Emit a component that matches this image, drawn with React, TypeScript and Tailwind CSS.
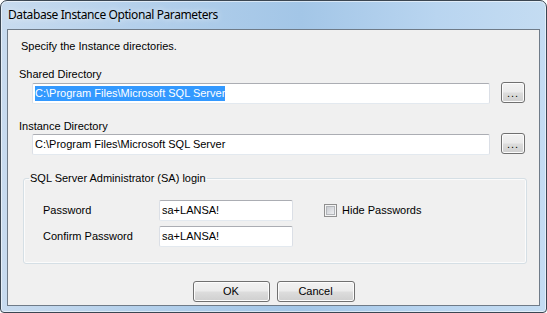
const ui = "font-['Liberation_Sans',Arial,sans-serif] text-[11px] leading-[13px] text-black";
const field =
  "h-[21px] flex items-center pl-[2px] bg-white border border-t-[#abadb3] border-l-[#dbdfe6] border-r-[#dbdfe6] border-b-[#e3e9ef] rounded-[2px] whitespace-nowrap overflow-hidden";
const btn =
  "h-[21px] flex items-center justify-center rounded-[3px] border border-[#707070] shadow-[inset_0_0_0_1px_#fcfcfc] bg-[linear-gradient(180deg,#f2f2f2_0%,#ebebeb_48%,#dddddd_52%,#cfcfcf_100%)]";

function Browse() {
  return (
    <div className={`${btn} w-[24px] ml-[11px]`}>
      <span className="text-[11px] leading-[11px] mt-[2px] tracking-[1px]">...</span>
    </div>
  );
}

export default function App() {
  return (
    <div className="w-[547px] h-[313px] flex flex-col px-[6px] pb-[6px] rounded-t-[7px] rounded-b-[4px] border border-[#3b4652] shadow-[inset_0_0_0_1px_rgba(255,255,255,0.55)] bg-[linear-gradient(90deg,#c8dbef_0%,#b4d0eb_25%,#a3c6e7_55%,#b9d5f0_80%,#c4dcf2_100%)]">
      <div className="h-[28px] flex items-center pl-[1px]">
        <span className="font-['Noto_Sans','Open_Sans',sans-serif] text-[12px] tracking-[-0.4px] text-black [text-shadow:0_0_6px_rgba(255,255,255,0.9)]">
          Database Instance Optional Parameters
        </span>
      </div>

      <div className={`flex-1 flex flex-col border border-[#6f7b88] bg-[#f0f0f0] ${ui}`}>
        <div className="mt-[10px] pl-[13px]">Specify the Instance directories.</div>

        <div className="mt-[15px] pl-[11px]">Shared Directory</div>
        <div className="mt-[1px] pl-[24px] flex items-start h-[22px]">
          <div className={`${field} w-[458px] mt-[1px]`}>
            <span className="bg-[#3399ff] text-white leading-[15px]">C:\Program Files\Microsoft SQL Server</span>
          </div>
          <Browse />
        </div>

        <div className="mt-[16px] pl-[11px]">Instance Directory</div>
        <div className="pl-[24px] flex items-start h-[22px]">
          <div className={`${field} w-[458px] mt-[1px]`}>
            <span>C:\Program Files\Microsoft SQL Server</span>
          </div>
          <Browse />
        </div>

        <fieldset className="mt-[17px] ml-[15px] w-[504px] border border-[#d5dfe5] rounded-[3px] px-0 pt-[15px] pb-[16px] shadow-[inset_0_0_0_1px_#fbfbfb]">
          <legend className="ml-[5px] px-[1px]">SQL Server Administrator (SA) login</legend>
          <div className="flex flex-col gap-[5px] pl-[19px]">
            <div className="flex items-center">
              <span className="w-[116px]">Password</span>
              <div className={`${field} w-[134px]`}>sa+LANSA!</div>
              <label className="flex items-center ml-[31px] gap-[5px]">
                <span className="w-[13px] h-[13px] border border-[#8f8f8f] bg-[#f4f4f4] p-[1px] flex">
                  <span className="flex-1 border border-[#b3b6ba] bg-[linear-gradient(135deg,#c9ccd1,#eeeff1)]" />
                </span>
                Hide Passwords
              </label>
            </div>
            <div className="flex items-center">
              <span className="w-[116px]">Confirm Password</span>
              <div className={`${field} w-[134px]`}>sa+LANSA!</div>
            </div>
          </div>
        </fieldset>

        <div className="mt-[17px] flex justify-center gap-[7px]">
          <div className={`${btn} w-[77px]`}>OK</div>
          <div className={`${btn} w-[78px]`}>Cancel</div>
        </div>
      </div>
    </div>
  );
}
